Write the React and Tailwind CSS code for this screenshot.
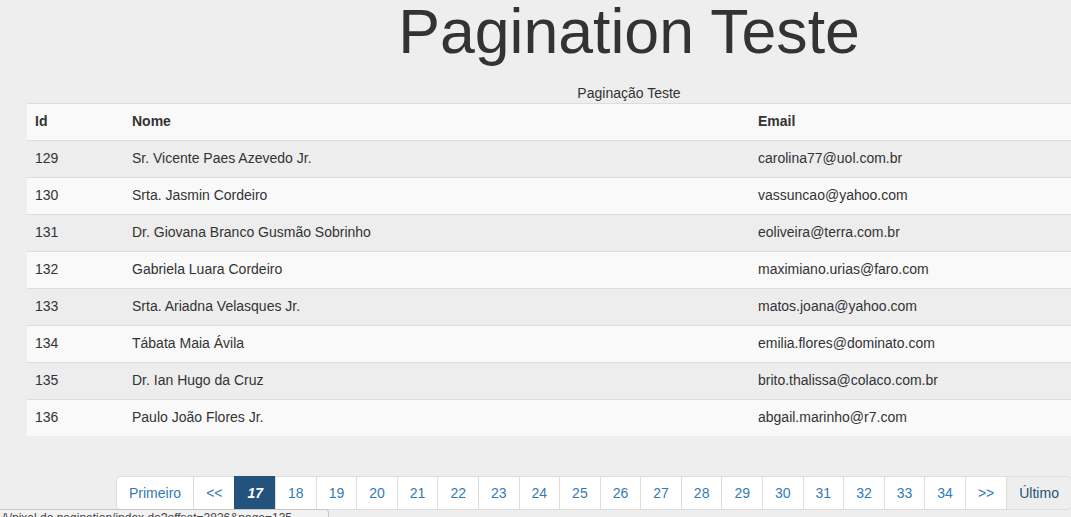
const rows = [
  { id: 129, nome: 'Sr. Vicente Paes Azevedo Jr.', email: 'carolina77@uol.com.br' },
  { id: 130, nome: 'Srta. Jasmin Cordeiro', email: 'vassuncao@yahoo.com' },
  { id: 131, nome: 'Dr. Giovana Branco Gusmão Sobrinho', email: 'eoliveira@terra.com.br' },
  { id: 132, nome: 'Gabriela Luara Cordeiro', email: 'maximiano.urias@faro.com' },
  { id: 133, nome: 'Srta. Ariadna Velasques Jr.', email: 'matos.joana@yahoo.com' },
  { id: 134, nome: 'Tábata Maia Ávila', email: 'emilia.flores@dominato.com' },
  { id: 135, nome: 'Dr. Ian Hugo da Cruz', email: 'brito.thalissa@colaco.com.br' },
  { id: 136, nome: 'Paulo João Flores Jr.', email: 'abgail.marinho@r7.com' },
];

const pages = [18, 19, 20, 21, 22, 23, 24, 25, 26, 27, 28, 29, 30, 31, 32, 33, 34];

const linkClass = 'block -ml-px border border-[#ddd] bg-white px-3 py-[6px] leading-5 text-[#337ab7]';

export default function App() {
  return (
    <div className="min-h-screen w-full overflow-hidden bg-[#eeeeee] font-['Liberation_Sans',Arial,sans-serif] text-sm text-[#333]">
      <div className="ml-[27px] w-[1204px]">
        <h1 className="mb-[21px] text-center text-[62.6px] font-normal leading-[62px]">Pagination Teste</h1>
        <table className="w-full border-collapse">
          <caption className="h-5 leading-5 text-[#333]">Paginação Teste</caption>
          <thead>
            <tr className="border-t border-[#ddd] bg-[#f9f9f9]">
              <th className="w-[97px] px-2 pt-[7px] pb-[9px] text-left font-bold leading-5">Id</th>
              <th className="w-[626px] px-2 pt-[7px] pb-[9px] text-left font-bold leading-5">Nome</th>
              <th className="px-2 pt-[7px] pb-[9px] text-left font-bold leading-5">Email</th>
            </tr>
          </thead>
          <tbody>
            {rows.map((r, i) => (
              <tr key={r.id} className={i % 2 === 0 ? 'border-t border-[#ddd] bg-[#ededed]' : 'border-t border-[#ddd] bg-[#f9f9f9]'}>
                <td className="px-2 pt-[7px] pb-[9px] leading-5">{r.id}</td>
                <td className="px-2 pt-[7px] pb-[9px] leading-5">{r.nome}</td>
                <td className="px-2 pt-[7px] pb-[9px] leading-5">{r.email}</td>
              </tr>
            ))}
          </tbody>
        </table>
      </div>

      <ul className="ml-[116px] mt-[40px] flex whitespace-nowrap">
        <li><a className="block rounded-l border border-[#ddd] bg-white px-3 py-[6px] leading-5 text-[#337ab7]">Primeiro</a></li>
        <li><a className={linkClass}>&lt;&lt;</a></li>
        <li><a className="block -ml-px border border-[#23527c] bg-[#23527c] px-3 py-[6px] font-bold italic leading-5 text-white">17</a></li>
        {pages.map((p) => (
          <li key={p}><a className={linkClass}>{p}</a></li>
        ))}
        <li><a className={linkClass}>&gt;&gt;</a></li>
        <li><a className="block -ml-px rounded-r border border-[#ddd] bg-[#eeeeee] px-3 py-[6px] leading-5 text-[#23527c]">Último</a></li>
      </ul>

      <div className="fixed bottom-0 left-0 h-[8px] w-[329px] overflow-hidden rounded-tr border-t border-r border-[#c8c8c8] bg-[#f2f2f2] pl-[2px] text-[12px] leading-[16px] text-[#444]">
        /\/pixel.do.pagination/index.do?offset=2826&amp;page=135
      </div>
    </div>
  );
}
